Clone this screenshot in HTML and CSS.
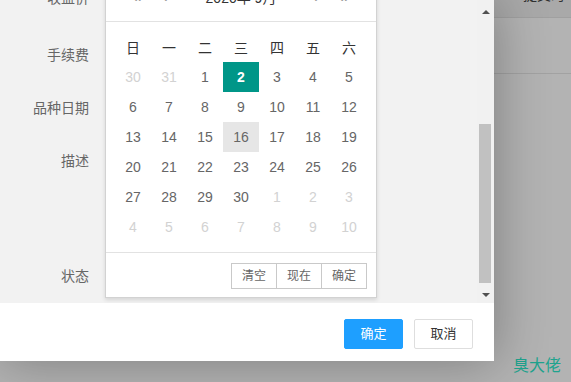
FILE: index.html
```html
<!DOCTYPE html>
<html lang="zh-CN">
<head>
    <meta charset="UTF-8">
    <title>编辑</title>
    <link rel="stylesheet" href="styles.css">
</head>
<body>
    <div class="layer">
        <div class="layer-content">
            <div class="form">
                <div class="form-item first"><label>收益价</label></div>
                <div class="form-item"><label>手续费</label></div>
                <div class="form-item"><label>品种日期</label></div>
                <div class="form-item tall"><label>描述</label></div>
                <div class="form-item"><label>状态</label></div>
            </div>

            <!-- date picker popup -->
            <div class="laydate">
                <div class="laydate-header">
                    <span class="chev">«</span>
                    <span class="chev">‹</span>
                    <span class="ym">2020年 9月</span>
                    <span class="chev">›</span>
                    <span class="chev">»</span>
                </div>
                <div class="laydate-content">
                    <div class="week">
                        <span>日</span><span>一</span><span>二</span><span>三</span><span>四</span><span>五</span><span>六</span>
                    </div>
                    <div class="days">
                        <span class="other">30</span><span class="other">31</span><span>1</span><span class="this">2</span><span>3</span><span>4</span><span>5</span>
                        <span>6</span><span>7</span><span>8</span><span>9</span><span>10</span><span>11</span><span>12</span>
                        <span>13</span><span>14</span><span>15</span><span class="today">16</span><span>17</span><span>18</span><span>19</span>
                        <span>20</span><span>21</span><span>22</span><span>23</span><span>24</span><span>25</span><span>26</span>
                        <span>27</span><span>28</span><span>29</span><span>30</span><span class="other">1</span><span class="other">2</span><span class="other">3</span>
                        <span class="other">4</span><span class="other">5</span><span class="other">6</span><span class="other">7</span><span class="other">8</span><span class="other">9</span><span class="other">10</span>
                    </div>
                </div>
                <div class="laydate-footer">
                    <span class="btn">清空</span><span class="btn">现在</span><span class="btn">确定</span>
                </div>
            </div>

            <div class="scrollbar">
                <span class="arrow up"></span>
                <span class="thumb"></span>
                <span class="arrow down"></span>
            </div>
        </div>
        <div class="layer-btns">
            <a class="lbtn primary">确定</a>
            <a class="lbtn">取消</a>
        </div>
    </div>

    <div class="backdrop">
        <div class="th">提交时</div>
        <div class="tr"></div>
    </div>

    <div class="watermark">臭大佬</div>
</body>
</html>
```

FILE: styles.css
```css
body {
    margin: 0;
    width: 571px;
    height: 382px;
    overflow: hidden;
    display: flex;
    align-items: flex-start;
    background: #b3b3b3;
    font-family: "Liberation Sans", "Noto Sans CJK SC", sans-serif;
    font-size: 14px;
    color: #666;
    position: relative;
}

.layer {
    width: 494px;
    height: 361px;
    flex: none;
    background: #fff;
    box-shadow: 1px 1px 50px rgba(0, 0, 0, 0.3);
    position: relative;
    z-index: 1;
    display: flex;
    flex-direction: column;
}

.layer-content {
    height: 303px;
    background: #f2f2f2;
    position: relative;
    overflow: hidden;
}

.form {
    margin-top: -17px;
}
.form-item {
    height: 53px;
}
.form-item.tall {
    height: 115px;
}
.form-item label {
    display: block;
    width: 89px;
    line-height: 38px;
    text-align: right;
    color: #666;
}
.form-item.first label {
    line-height: 30px;
}

/* date picker */
.laydate {
    position: absolute;
    left: 105px;
    top: -25px;
    width: 270px;
    background: #fff;
    border: 1px solid #d2d2d2;
    box-shadow: 0 2px 4px rgba(0, 0, 0, 0.12);
    z-index: 2;
}
.laydate-header {
    display: flex;
    align-items: center;
    gap: 12px;
    padding: 6px 23px 9px;
    height: 30px;
    border-bottom: 1px solid #e2e2e2;
}
.laydate-header .chev {
    width: 16px;
    text-align: center;
    color: #999;
    font-size: 16px;
}
.laydate-header .ym {
    flex: 1;
    text-align: center;
    color: #333;
}
.laydate-content {
    padding: 10px 9px;
}
.week, .days {
    display: grid;
    grid-template-columns: repeat(7, 36px);
    grid-auto-rows: 30px;
}
.week span, .days span {
    display: flex;
    align-items: center;
    justify-content: center;
}
.week span {
    color: #333;
}
.days span {
    color: #666;
}
.days .other {
    color: #d2d2d2;
}
.days .this {
    background: #009688;
    color: #fff;
    font-weight: bold;
}
.days .today {
    background: #e6e6e6;
}
.laydate-footer {
    display: flex;
    justify-content: flex-end;
    padding: 10px 9px 8px;
    border-top: 1px solid #e2e2e2;
}
.laydate-footer .btn {
    height: 24px;
    line-height: 24px;
    padding: 0 10px;
    border: 1px solid #c9c9c9;
    margin-left: -1px;
    font-size: 12px;
    color: #666;
}

/* fake scrollbar */
.scrollbar {
    position: absolute;
    right: 0;
    top: 0;
    bottom: 0;
    width: 17px;
    background: #f1f1f1;
}
.scrollbar .thumb {
    position: absolute;
    left: 2px;
    right: 3px;
    top: 124px;
    height: 159px;
    background: #c1c1c1;
}
.scrollbar .arrow {
    position: absolute;
    left: 5px;
    width: 0;
    height: 0;
    border-left: 4px solid transparent;
    border-right: 4px solid transparent;
}
.scrollbar .up {
    top: 10px;
    border-bottom: 4px solid #505050;
}
.scrollbar .down {
    top: 293px;
    border-top: 4px solid #505050;
}

.layer-btns {
    flex: 1;
    display: flex;
    justify-content: flex-end;
    align-items: flex-start;
    gap: 11px;
    padding: 16px 21px 0 0;
}
.lbtn {
    box-sizing: border-box;
    width: 59px;
    height: 30px;
    line-height: 28px;
    text-align: center;
    border: 1px solid #dedede;
    background: #fff;
    color: #333;
    font-size: 13px;
    border-radius: 2px;
}
.lbtn.primary {
    background: #1e9fff;
    border-color: #1e9fff;
    color: #fff;
}

/* page behind the shade */
.backdrop {
    flex: 1;
}
.backdrop .th {
    height: 38px;
    margin-top: -21px;
    line-height: 32px;
    padding-left: 29px;
    background: #a9a9a9;
    border-bottom: 1px solid #a0a0a0;
    color: #303030;
}
.backdrop .tr {
    height: 55px;
    border-bottom: 1px solid #a2a2a2;
}

.watermark {
    position: absolute;
    left: 513px;
    top: 352px;
    font-size: 16px;
    color: #1fa38e;
    font-family: "Noto Sans CJK SC", sans-serif;
}
```
